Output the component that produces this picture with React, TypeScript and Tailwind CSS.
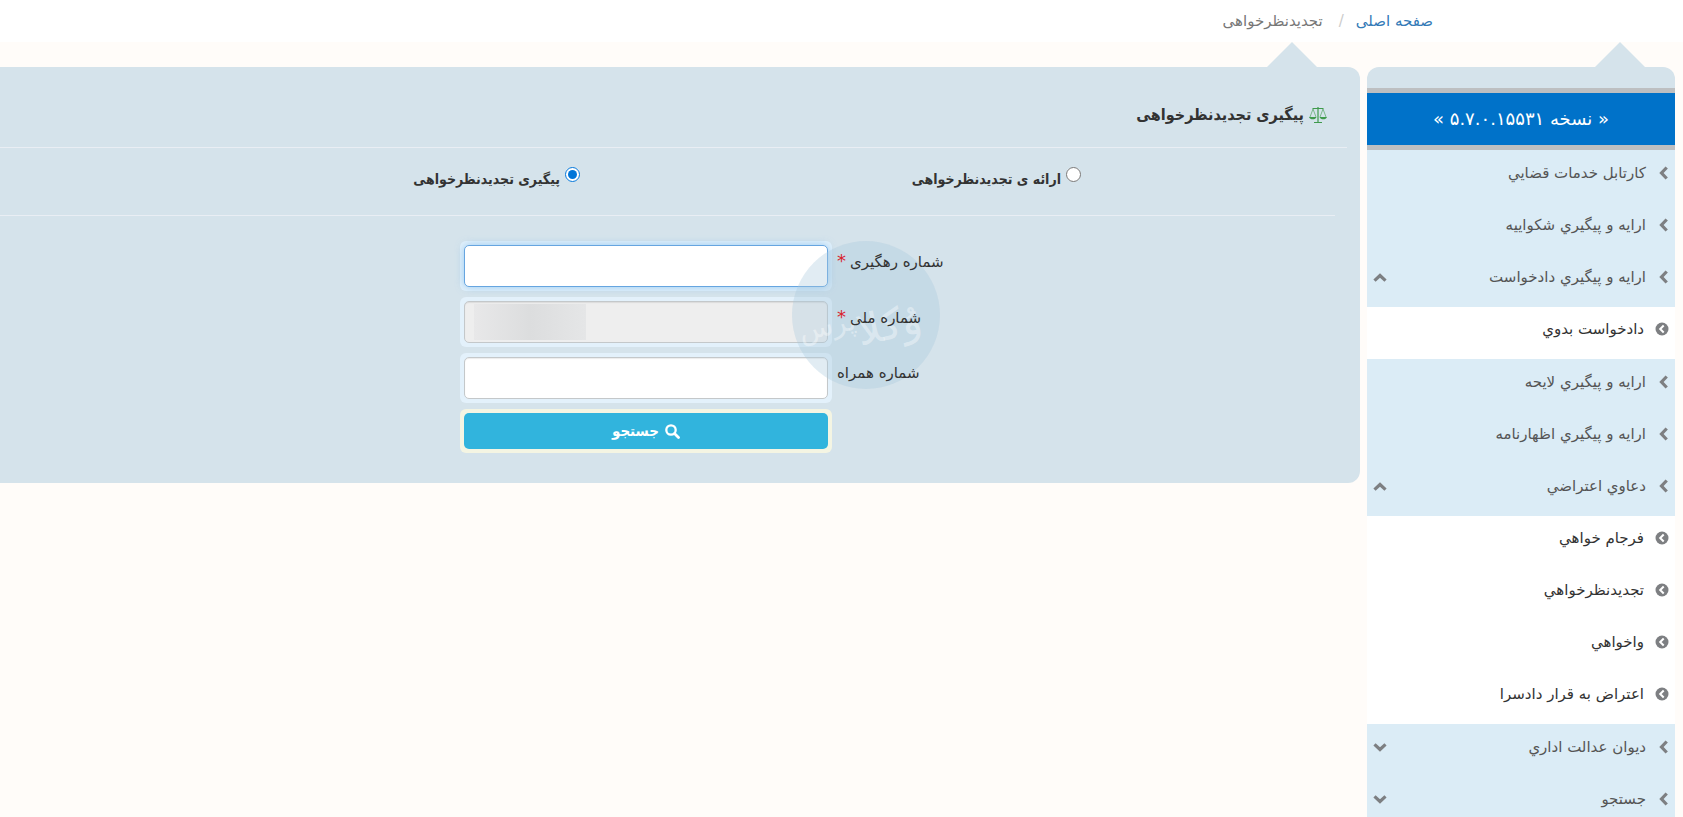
import { useState } from "react";
import type { ReactNode } from "react";

type MenuItem = {
  label: string;
  arrow?: "up" | "down";
};

type MenuGroup = {
  sub: boolean;
  items: MenuItem[];
};

const MENU: MenuGroup[] = [
  {
    sub: false,
    items: [
      { label: "كارتابل خدمات قضايي" },
      { label: "ارايه و پيگيري شكواييه" },
      { label: "ارايه و پيگيري دادخواست", arrow: "up" },
    ],
  },
  { sub: true, items: [{ label: "دادخواست بدوي" }] },
  {
    sub: false,
    items: [
      { label: "ارايه و پيگيري لايحه" },
      { label: "ارايه و پيگيري اظهارنامه" },
      { label: "دعاوي اعتراضي", arrow: "up" },
    ],
  },
  {
    sub: true,
    items: [
      { label: "فرجام خواهي" },
      { label: "تجديدنظرخواهي" },
      { label: "واخواهي" },
      { label: "اعتراض به قرار دادسرا" },
    ],
  },
  {
    sub: false,
    items: [
      { label: "ديوان عدالت اداري", arrow: "down" },
      { label: "جستجو", arrow: "down" },
    ],
  },
];

export default function App() {
  const [mode, setMode] = useState("follow");

  return (
    <div
      dir="rtl"
      className="flex h-screen flex-col overflow-hidden bg-[#fffcf9] font-['DejaVu_Sans',sans-serif] text-[#333]"
    >
      {/* BREADCRUMB */}
      <nav className="h-[42px] shrink-0 bg-white pr-[250px]">
        <ol className="flex h-full items-center text-[15px]">
          <li>
            <a href="#home" className="text-[#337ab7]">
              صفحه اصلی
            </a>
          </li>
          <li className="pr-3 pl-4 text-[#ccc]">/</li>
          <li className="text-[#777]">تجدیدنظرخواهی</li>
        </ol>
      </nav>

      <div className="flex min-h-0 flex-1 items-start gap-[7px] pr-2">
        <Sidebar />

        <main className="min-w-0 flex-1">
          <Notch className="mr-[43px]" />
          <div className="rounded-r-xl bg-[#d5e3eb] pb-[30px]">
            <h1 className="mr-[13px] flex h-[81px] items-center gap-[5px] border-b border-[#e9eef4] pt-4 pr-5 font-['DejaVu_Sans_Condensed','DejaVu_Sans',sans-serif] text-base font-bold">
              <ScalesIcon />
              پیگیری تجدیدنظرخواهی
            </h1>

            <fieldset className="mr-[25px] flex h-[68px] border-b border-[#e9eef4] pt-[19px]">
              <Choice
                label="ارائه ی تجدیدنظرخواهی"
                checked={mode === "submit"}
                onPick={() => setMode("submit")}
                className="mr-[254px] w-[501px]"
              />
              <Choice
                label="پیگیری تجدیدنظرخواهی"
                checked={mode === "follow"}
                onPick={() => setMode("follow")}
              />
            </fieldset>

            <form
              className="relative mt-[25px] ml-[460px] flex flex-col gap-1.5"
              onSubmit={(e) => e.preventDefault()}
            >
              <Field id="tracking" label="شماره رهگیری" required>
                <input
                  id="tracking"
                  type="text"
                  className="block h-[42px] w-full rounded-[5px] border border-[#66a5e0] bg-white px-3 shadow-[0_0_8px_rgba(102,175,233,0.6)] outline-none"
                />
              </Field>
              <Field id="national" label="شماره ملی" required>
                <div className="relative">
                  <input
                    id="national"
                    type="text"
                    disabled
                    className="block h-[42px] w-full rounded-[5px] border border-[#c4c8ca] bg-[#eee] px-3 shadow-[inset_0_1px_1px_rgba(0,0,0,0.08)]"
                  />
                  <div className="absolute top-[3px] left-[10px] h-9 w-28 bg-linear-to-r from-[#e8e8e9] via-[#dcddde] to-[#e5e6e7]" />
                </div>
              </Field>
              <Field id="mobile" label="شماره همراه">
                <input
                  id="mobile"
                  type="text"
                  className="block h-[42px] w-full rounded-[5px] border border-[#c4c8ca] bg-white px-3 shadow-[inset_0_1px_1px_rgba(0,0,0,0.08)]"
                />
              </Field>
              <div className="flex justify-end">
                <div className="w-[372px] rounded-md bg-[#f4f5e3] p-1">
                  <button
                    type="submit"
                    className="flex h-9 w-full items-center justify-center gap-1.5 rounded-[5px] bg-[#31b4dd] font-['DejaVu_Sans_Condensed','DejaVu_Sans',sans-serif] text-[15px] font-bold text-white"
                  >
                    <SearchIcon />
                    جستجو
                  </button>
                </div>
              </div>
              <Watermark />
            </form>
          </div>
        </main>
      </div>
    </div>
  );
}

function Sidebar() {
  return (
    <aside className="w-[308px] shrink-0">
      <Notch className="mr-[30px]" />
      <div className="h-[21px] rounded-t-xl bg-[#d5e3eb]" />
      <div className="flex h-[62px] items-center justify-center border-y-5 border-[#bdbfc1] bg-[#0072c9] text-lg text-white">
        « نسخه ۵.۷.۰.۱۵۵۳۱ »
      </div>
      <nav>
        {MENU.map((group, i) => (
          <ul
            key={i}
            className={group.sub ? "bg-white" : "bg-[#dbecf6] pb-px"}
          >
            {group.items.map((item) => (
              <li key={item.label}>
                <a
                  href="#menu"
                  className={
                    group.sub
                      ? "flex h-[52px] items-center gap-[11px] pr-1.5 pb-2 pl-1.5 text-[15px] text-[#333]"
                      : "flex h-[52px] items-center gap-[13px] pr-[7px] pb-1.5 pl-1.5 text-[15px] text-[#555]"
                  }
                >
                  {group.sub ? <CircleIcon /> : <ChevronIcon />}
                  <span className="flex-1">{item.label}</span>
                  {item.arrow && <ArrowIcon up={item.arrow === "up"} />}
                </a>
              </li>
            ))}
          </ul>
        ))}
      </nav>
    </aside>
  );
}

// Pointer on top of a panel.
function Notch({ className }: { className: string }) {
  return (
    <svg
      width="50"
      height="25"
      viewBox="0 0 50 25"
      className={`block ${className}`}
    >
      <path d="M25 0 50 25H0z" fill="#d5e3eb" />
    </svg>
  );
}

function Choice({
  label,
  checked,
  onPick,
  className = "",
}: {
  label: string;
  checked: boolean;
  onPick: () => void;
  className?: string;
}) {
  return (
    <div className={className}>
      <label className="flex w-fit items-start gap-[5px] font-['DejaVu_Sans_Condensed','DejaVu_Sans',sans-serif] text-sm font-bold">
        <input
          type="radio"
          name="mode"
          checked={checked}
          onChange={onPick}
          className="size-[15px] accent-[#0075d8]"
        />
        <span className="pt-0.5">{label}</span>
      </label>
    </div>
  );
}

function Field({
  id,
  label,
  required = false,
  children,
}: {
  id: string;
  label: string;
  required?: boolean;
  children: ReactNode;
}) {
  return (
    <div className="flex items-start justify-end gap-[5px]">
      <label htmlFor={id} className="relative z-10 pt-2.5 text-[15px] leading-5">
        {label}
        {required && <span className="mr-1 text-lg leading-5 text-[#d9232e]">*</span>}
      </label>
      <div className="w-[372px] rounded-md bg-[#e3f1fb] p-1">{children}</div>
    </div>
  );
}

function Watermark() {
  return (
    <svg
      width="150"
      height="150"
      viewBox="0 0 150 150"
      aria-hidden="true"
      className="pointer-events-none absolute top-0 left-[331px]"
    >
      <circle cx="75" cy="74" r="74" fill="#a9c9dd" fillOpacity="0.35" />
      <g fill="#fff" fillOpacity="0.4" textAnchor="middle">
        <text x="101" y="98" fontSize="42" transform="rotate(-12 101 98)">
          وُکلا
        </text>
        <text x="38" y="94" fontSize="28" transform="rotate(-12 38 94)">
          پرس
        </text>
      </g>
    </svg>
  );
}

function ScalesIcon() {
  return (
    <svg width="18" height="16" viewBox="0 0 18 16" fill="none" stroke="#3f9a4c">
      <path d="M3.500 1.500h11M9 0v15M5 15.500h8" strokeWidth="1.200" />
      <path d="M4 2 1 10M4 2l3 8M14 2l-3 8M14 2l3 8" strokeWidth="0.600" />
      <path
        d="M0 10h7.500c-.5 1.700-2 2.300-3.700 2.300S.5 11.700 0 10zM10.500 10H18c-.5 1.700-2 2.300-3.700 2.300s-3.300-.6-3.800-2.300z"
        fill="#3f9a4c"
        stroke="none"
      />
    </svg>
  );
}

function SearchIcon() {
  return (
    <svg width="15" height="15" viewBox="0 0 15 15" fill="none" stroke="#fff">
      <circle cx="6" cy="6" r="4.700" strokeWidth="2.300" />
      <path d="m9.500 9.500 4 4" strokeWidth="2.800" strokeLinecap="round" />
    </svg>
  );
}

function ChevronIcon() {
  return (
    <svg width="9" height="14" viewBox="0 0 9 14" fill="none">
      <path d="M7.700 1.500 2.500 7l5.200 5.500" stroke="#7d7f82" strokeWidth="3.200" />
    </svg>
  );
}

function CircleIcon() {
  return (
    <svg width="14" height="14" viewBox="0 0 14 14" fill="none">
      <circle cx="7" cy="7" r="6.500" fill="#7d7f82" />
      <path d="M8.700 3.500 5.200 7l3.500 3.500" stroke="#fff" strokeWidth="2" />
    </svg>
  );
}

function ArrowIcon({ up }: { up: boolean }) {
  return (
    <svg width="14" height="9" viewBox="0 0 14 9" fill="none">
      <path
        d={up ? "M1.500 7.700 7 2.500l5.500 5.200" : "M1.500 1.300 7 6.500l5.500-5.200"}
        stroke="#7d7f82"
        strokeWidth="3.200"
      />
    </svg>
  );
}
